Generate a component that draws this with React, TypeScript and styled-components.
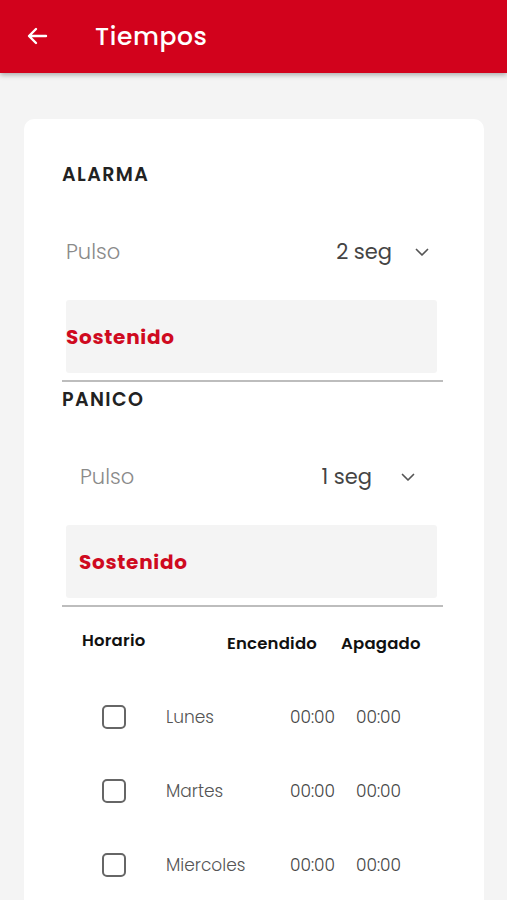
import React from "react";
import styled, { createGlobalStyle } from "styled-components";

const Global = createGlobalStyle`
  html, body { margin: 0; padding: 0; background: #f4f4f4; }
  body { font-family: "Poppins", "Open Sans", "Noto Sans", sans-serif; }
  * { box-sizing: border-box; }
`;

const Page = styled.div`
  width: 507px;
  height: 900px;
  overflow: hidden;
  background: #f4f4f4;
`;

const Header = styled.header`
  height: 73px;
  background: #d2021c;
  display: flex;
  align-items: center;
  padding-left: 24px;
  gap: 45px;
  box-shadow: 0 2px 5px rgba(0, 0, 0, 0.3);
  position: relative;
  z-index: 1;
`;

const BackButton = styled.div`
  width: 26px;
  height: 26px;
  display: flex;
  align-items: center;
  justify-content: center;
  margin-top: -1px;
`;

const Title = styled.h1`
  margin: 0;
  color: #fff;
  font-size: 25px;
  line-height: 30px;
  font-weight: 500;
  letter-spacing: 0.6px;
`;

const Main = styled.main`
  padding: 46px 23px 0 24px;
`;

const Card = styled.section`
  background: #fff;
  border-radius: 10px;
  padding: 45px 41px 40px 38px;
  min-height: 900px;
`;

const SectionTitle = styled.h2`
  margin: 0;
  font-size: 19px;
  line-height: 22px;
  font-weight: 600;
  color: #222;
  letter-spacing: 1.4px;
`;

const PulseRow = styled.div<{ $indent: number; $right: number }>`
  height: 56px;
  margin-top: 38px;
  display: flex;
  align-items: center;
  padding-left: ${(p) => p.$indent}px;
  padding-right: ${(p) => p.$right}px;
`;

const PulseLabel = styled.span`
  flex: 1;
  font-size: 21px;
  line-height: 28px;
  font-weight: 300;
  color: #8a8a8a;
`;

const PulseValue = styled.span<{ $gap: number }>`
  font-size: 21px;
  line-height: 28px;
  font-weight: 400;
  color: #444;
  margin-right: ${(p) => p.$gap}px;
`;

const Chevron = styled.svg`
  width: 14px;
  height: 9px;
  display: block;
`;

const HoldBox = styled.div<{ $pad: number }>`
  margin: 20px 6px 0 4px;
  height: 73px;
  background: #f4f4f4;
  border-radius: 3px;
  display: flex;
  align-items: center;
  padding-left: ${(p) => p.$pad}px;
  font-size: 20px;
  font-weight: 700;
  color: #cf0a1f;
  letter-spacing: 0.7px;
`;

const Divider = styled.hr`
  margin: 7px 0 0;
  border: 0;
  height: 2px;
  background: #bdbdbd;
`;

const Section = styled.div<{ $titleGap: number }>`
  & > ${SectionTitle} {
    margin-top: ${(p) => p.$titleGap}px;
  }
`;

const TableHead = styled.div`
  display: flex;
  align-items: flex-start;
  margin-top: 23px;
  padding-left: 20px;
  height: 26px;
  font-size: 16.5px;
  line-height: 22px;
  font-weight: 600;
  color: #111;
`;

const HeadCell = styled.span<{ $w: number; $dy: number }>`
  width: ${(p) => p.$w}px;
  margin-top: ${(p) => p.$dy}px;
  letter-spacing: 0.2px;
`;

const Rows = styled.div`
  margin-top: 24px;
  display: flex;
  flex-direction: column;
`;

const DayRow = styled.div`
  display: grid;
  grid-template-columns: 64px 124px 66px 66px;
  align-items: center;
  height: 74px;
  padding-left: 40px;
  font-size: 17px;
  font-weight: 300;
  color: #555;
`;

const CheckBox = styled.span`
  width: 24px;
  height: 24px;
  border: 2px solid #666;
  border-radius: 5px;
  display: block;
`;

const Time = styled.span`
  color: #444;
  font-weight: 300;
`;

const ChevronDown = () => (
  <Chevron viewBox="0 0 14 9">
    <path d="M1.5 1.5l5.5 5.5 5.5-5.5" fill="none" stroke="#555" strokeWidth="1.7" strokeLinecap="round" strokeLinejoin="round" />
  </Chevron>
);

const days = ["Lunes", "Martes", "Miercoles"];

export default function App() {
  return (
    <Page>
      <Global />
      <Header>
        <BackButton>
          <svg width="24" height="24" viewBox="0 0 24 24">
            <path d="M21 12H4.5M11 5l-7 7 7 7" fill="none" stroke="#fff" strokeWidth="2.4" strokeLinecap="round" strokeLinejoin="round" />
          </svg>
        </BackButton>
        <Title>Tiempos</Title>
      </Header>
      <Main>
        <Card>
          <Section $titleGap={0}>
            <SectionTitle>ALARMA</SectionTitle>
            <PulseRow $indent={4} $right={14}>
              <PulseLabel>Pulso</PulseLabel>
              <PulseValue $gap={23}>2 seg</PulseValue>
              <ChevronDown />
            </PulseRow>
            <HoldBox $pad={0}>Sostenido</HoldBox>
            <Divider />
          </Section>
          <Section $titleGap={7}>
            <SectionTitle>PANICO</SectionTitle>
            <PulseRow $indent={18} $right={28}>
              <PulseLabel>Pulso</PulseLabel>
              <PulseValue $gap={29}>1 seg</PulseValue>
              <ChevronDown />
            </PulseRow>
            <HoldBox $pad={13}>Sostenido</HoldBox>
            <Divider />
          </Section>
          <TableHead>
            <HeadCell $w={145} $dy={0}>Horario</HeadCell>
            <HeadCell $w={114} $dy={3}>Encendido</HeadCell>
            <HeadCell $w={90} $dy={3}>Apagado</HeadCell>
          </TableHead>
          <Rows>
            {days.map((d) => (
              <DayRow key={d}>
                <CheckBox />
                <span>{d}</span>
                <Time>00:00</Time>
                <Time>00:00</Time>
              </DayRow>
            ))}
          </Rows>
        </Card>
      </Main>
    </Page>
  );
}
